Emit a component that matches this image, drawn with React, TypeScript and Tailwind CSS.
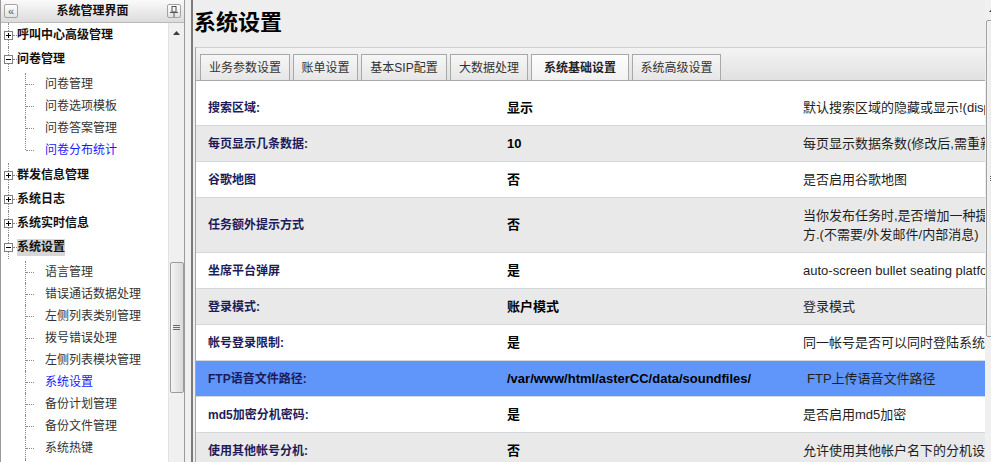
import React from "react";

const font = "font-['Liberation_Sans','Noto_Sans_CJK_SC',sans-serif]";

type Leaf = { label: string; active?: boolean };
type Branch = { label: string; open: boolean; selected?: boolean; more?: boolean; children?: Leaf[] };

const tree: Branch[] = [
  { label: "呼叫中心高级管理", open: false },
  {
    label: "问卷管理",
    open: true,
    children: [
      { label: "问卷管理" },
      { label: "问卷选项模板" },
      { label: "问卷答案管理" },
      { label: "问卷分布统计", active: true },
    ],
  },
  { label: "群发信息管理", open: false },
  { label: "系统日志", open: false },
  { label: "系统实时信息", open: false },
  {
    label: "系统设置",
    open: true,
    selected: true,
    more: true,
    children: [
      { label: "语言管理" },
      { label: "错误通话数据处理" },
      { label: "左侧列表类别管理" },
      { label: "拨号错误处理" },
      { label: "左侧列表模块管理" },
      { label: "系统设置", active: true },
      { label: "备份计划管理" },
      { label: "备份文件管理" },
      { label: "系统热键" },
    ],
  },
];

const tabs = [
  { label: "业务参数设置", w: "w-[90px]" },
  { label: "账单设置", w: "w-[65px]" },
  { label: "基本SIP配置", w: "w-[86px]" },
  { label: "大数据处理", w: "w-[78px]" },
  { label: "系统基础设置", w: "w-[98px]", active: true },
  { label: "系统高级设置", w: "w-[89px]" },
];

type Row = { label: string; value: string; desc: React.ReactNode; tall?: boolean; hi?: boolean; descPad?: string };

const rows: Row[] = [
  { label: "搜索区域:", value: "显示", desc: "默认搜索区域的隐藏或显示!(display/hidden)" },
  { label: "每页显示几条数据:", value: "10", desc: "每页显示数据条数(修改后,需重新登录)" },
  { label: "谷歌地图", value: "否", desc: "是否启用谷歌地图" },
  {
    label: "任务额外提示方式",
    value: "否",
    tall: true,
    desc: (
      <>
        当你发布任务时,是否增加一种提示方式,提示的地
        <br />
        方.(不需要/外发邮件/内部消息)
      </>
    ),
  },
  { label: "坐席平台弹屏", value: "是", desc: "auto-screen bullet seating platform" },
  { label: "登录模式:", value: "账户模式", desc: "登录模式" },
  { label: "帐号登录限制:", value: "是", desc: "同一帐号是否可以同时登陆系统" },
  { label: "FTP语音文件路径:", value: "/var/www/html/asterCC/data/soundfiles/", desc: "FTP上传语音文件路径", hi: true, descPad: "pl-[16px]" },
  { label: "md5加密分机密码:", value: "是", desc: "是否启用md5加密" },
  { label: "使用其他帐号分机:", value: "否", desc: "允许使用其他帐户名下的分机设置" },
];

const UpArrow = () => (
  <svg width="7" height="4" viewBox="0 0 7 4">
    <path d="M0 4 L3.5 0 L7 4 Z" fill="#3c3c3c" />
  </svg>
);

const Grip = () => (
  <div className="flex flex-col gap-[1px]">
    <div className="w-[7px] h-[1px] bg-[#6a6a6a]" />
    <div className="w-[7px] h-[1px] bg-[#6a6a6a]" />
    <div className="w-[7px] h-[1px] bg-[#6a6a6a]" />
  </div>
);

const Rail = ({ box }: { box?: "plus" | "minus" }) => (
  <div className="relative w-[16px] h-full shrink-0">
    <div className="absolute left-[7px] top-0 bottom-0 border-l border-dotted border-[#8a8a8a]" />
    {box && (
      <>
        <div className="absolute left-[12px] top-1/2 w-[4px] border-t border-dotted border-[#8a8a8a]" />
        <div className="absolute left-[3px] top-[8px] w-[9px] h-[9px] bg-white border border-[#808080] flex items-center justify-center">
          <div className="relative w-[5px] h-[5px] flex items-center justify-center">
            <div className="w-[5px] h-[1px] bg-black" />
            {box === "plus" && <div className="absolute left-[2px] top-0 w-[1px] h-[5px] bg-black" />}
          </div>
        </div>
      </>
    )}
  </div>
);

const Connector = ({ last }: { last: boolean }) => (
  <div className="relative w-[28px] h-full shrink-0">
    <div
      className={`absolute left-[8px] top-0 border-l border-dotted border-[#8a8a8a] ${last ? "h-1/2" : "h-full"}`}
    />
    <div className="absolute left-[9px] top-1/2 w-[8px] border-t border-dotted border-[#8a8a8a]" />
  </div>
);

function LeftPanel() {
  return (
    <div className="w-[185px] shrink-0 h-full flex flex-col border-l border-r border-[#9a9a9a]">
      <div className="h-[23px] shrink-0 border-b border-[#b9b9b9] bg-linear-to-b from-[#fafafa] to-[#dcdcdc] flex items-center px-[3px]">
        <div className="w-[14px] h-[14px] rounded-[2px] border border-[#a3a3a3] bg-linear-to-b from-white to-[#e2e2e2] flex items-center justify-center text-[11px] leading-none text-[#555]">
          «
        </div>
        <div className="flex-1 text-center text-[12px] font-bold text-[#111]">系统管理界面</div>
        <div className="w-[14px] h-[14px] rounded-[2px] border border-[#a3a3a3] bg-linear-to-b from-white to-[#e2e2e2] flex items-center justify-center">
          <svg width="8" height="11" viewBox="0 0 8 11">
            <rect x="2" y="0.5" width="4" height="5.5" fill="none" stroke="#555" />
            <rect x="0" y="6" width="8" height="1" fill="#555" />
            <rect x="3.5" y="7" width="1" height="4" fill="#555" />
          </svg>
        </div>
      </div>
      <div className="flex-1 flex overflow-hidden">
        <div className="w-[167px] shrink-0 bg-white overflow-hidden">
          {tree.map((b) => (
            <div key={b.label}>
              <div className="h-[24px] flex items-center">
                <Rail box={b.open ? "minus" : "plus"} />
                <span
                  className={`text-[12px] font-bold text-[#111] leading-[17px] ${b.selected ? "bg-[#d6d6d6]" : ""}`}
                >
                  {b.label}
                </span>
              </div>
              {b.children && (
                <div className="flex">
                  <Rail />
                  <div className="flex flex-col py-[2px]">
                    {b.children.map((c, i) => (
                      <div key={c.label + i} className="h-[22px] flex items-center">
                        <Connector last={!b.more && i === b.children!.length - 1} />
                        <span className={`text-[12px] whitespace-nowrap ${c.active ? "text-[#1a1aff]" : "text-[#333]"}`}>
                          {c.label}
                        </span>
                      </div>
                    ))}
                    {b.more && (
                      <div className="h-[22px] flex">
                        <Connector last={false} />
                      </div>
                    )}
                  </div>
                </div>
              )}
            </div>
          ))}
        </div>
        <div className="w-[16px] shrink-0 bg-[#f0f0f0] border-l border-[#e2e2e2] flex flex-col items-center">
          <div className="h-[20px] shrink-0 flex items-center justify-center">
            <UpArrow />
          </div>
          <div className="h-[219px] shrink-0" />
          <div className="h-[131px] w-[14px] shrink-0 rounded-[2px] border border-[#9c9c9c] bg-linear-to-r from-[#f4f4f4] to-[#d9d9d9] flex items-center justify-center">
            <Grip />
          </div>
        </div>
      </div>
    </div>
  );
}

function RightPanel() {
  const rowBg = (r: Row, i: number) => (r.hi ? "bg-[#6096fa]" : i % 2 === 0 ? "bg-white" : "bg-[#e9e9e9]");
  return (
    <div className="flex-1 h-full flex border-l-2 border-[#7a7a7a] overflow-hidden">
      <div className="w-[792px] shrink-0 h-full flex flex-col bg-[#eeeeee] overflow-hidden">
        <div className="h-[47px] shrink-0 pt-[9px] pl-[1px] text-[22px] leading-[28px] font-bold text-black">
          系统设置
        </div>
        <div className="flex-1 flex flex-col ml-[2px] border-l border-[#a5a5a5] overflow-hidden">
          <div className="h-[34px] shrink-0 border-t border-b border-t-[#cfcfcf] border-b-[#a9a9a9] bg-linear-to-b from-[#f3f3f3] to-[#e1e1e1] flex items-end gap-[3px] pl-[4px]">
            {tabs.map((t) => (
              <div
                key={t.label}
                className={`${t.w} h-[26px] shrink-0 border border-b-0 border-[#a8a8a8] flex items-center justify-center text-[12px] ${
                  t.active
                    ? "bg-linear-to-b from-[#fdfdfd] to-[#f2f2f2] font-bold text-[#222]"
                    : "bg-linear-to-b from-[#f6f6f6] to-[#e6e6e6] text-[#333]"
                }`}
              >
                {t.label}
              </div>
            ))}
          </div>
          <div className="flex-1 bg-white pt-[9px] overflow-hidden">
            {rows.map((r, i) => (
              <div
                key={r.label}
                className={`${r.tall ? "h-[55px]" : "h-[36px]"} flex items-center border-b border-[#d4d8dc] ${rowBg(r, i)}`}
              >
                <div className="w-[299px] shrink-0 pl-[12px] text-[12px] font-bold text-[#1c1c5a]">{r.label}</div>
                <div className="w-[296px] shrink-0 pl-[12px] text-[13px] font-bold text-black whitespace-nowrap">
                  {r.value}
                </div>
                <div className={`${r.descPad ?? "pl-[12px]"} text-[13px] whitespace-nowrap text-[#1e1e1e] leading-[19px]`}>
                  {r.desc}
                </div>
              </div>
            ))}
          </div>
        </div>
      </div>
      <div className="w-[17px] shrink-0 h-full bg-[#f0f0f0] flex flex-col">
        <div className="h-[20px] shrink-0 flex items-center pl-[4px]">
          <UpArrow />
        </div>
        <div className="h-[317px] w-[15px] ml-[1px] shrink-0 rounded-[2px] border border-[#a0a0a0] bg-linear-to-r from-[#f4f4f4] to-[#d9d9d9] flex items-center pl-[3px]">
          <Grip />
        </div>
      </div>
    </div>
  );
}

export default function App() {
  return (
    <div className={`w-[991px] h-[462px] overflow-hidden flex bg-[#f0f0f0] ${font}`}>
      <LeftPanel />
      <div className="w-[6px] shrink-0 h-full bg-[#f0f0f0]" />
      <RightPanel />
    </div>
  );
}
